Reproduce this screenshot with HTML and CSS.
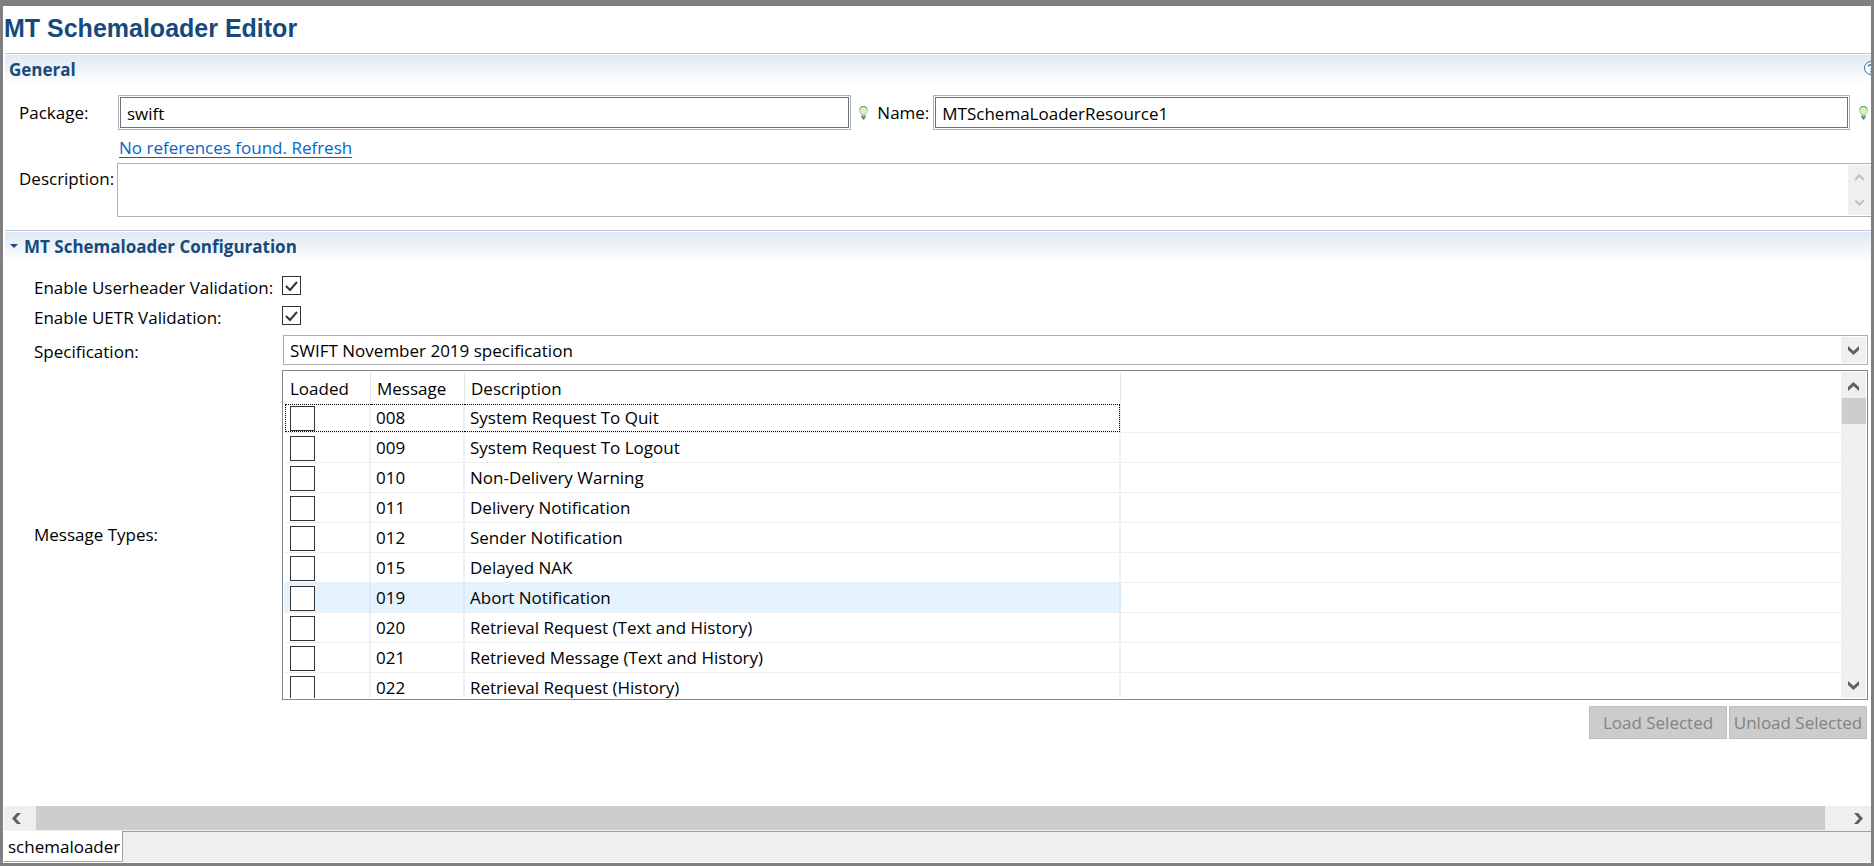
FILE: index.html
```html
<!DOCTYPE html>
<html lang="en">
<head>
<meta charset="UTF-8">
<meta name="viewport" content="width=device-width, initial-scale=1.0">
<title>MT Schemaloader Editor</title>
<link rel="stylesheet" href="styles.css">
</head>
<body>
<svg class="defs" width="0" height="0" aria-hidden="true">
    <symbol id="bulb" viewBox="0 0 9 14">
        <path d="M4.5 .5C2 .5.5 2 .5 4.300c0 2 1.600 2.600 2 4.700h4c.4-2.100 2-2.700 2-4.700C8.500 2 7 .5 4.500 .5z" fill="#e3eeb4" stroke="#8fcf9c"/>
        <path d="M1 2.500C1.600 1.200 2.800.5 4.500.5s2.900.7 3.500 2" fill="none" stroke="#3f9a5c"/>
        <path d="M2.500 9.500h4v2.500h-1v1.500h-2V12h-1z" fill="#54708c"/>
        <path d="M4 10.500h1.500" stroke="#c9d8e6"/>
    </symbol>
    <symbol id="down" viewBox="0 0 11 9">
        <path d="M0 0l5.500 5L11 0v4L5.500 9 0 4z" fill="currentColor"/>
    </symbol>
    <symbol id="up" viewBox="0 0 11 9">
        <path d="M0 9l5.500-5L11 9V5L5.500 0 0 5z" fill="currentColor"/>
    </symbol>
    <symbol id="left" viewBox="0 0 9 11">
        <path d="M9 0L4 5.500 9 11H5L0 5.500 5 0z" fill="currentColor"/>
    </symbol>
    <symbol id="right" viewBox="0 0 9 11">
        <path d="M0 0l5 5.500L0 11h4l5-5.500L4 0z" fill="currentColor"/>
    </symbol>
</svg>

<main class="editor">
    <h1>MT Schemaloader Editor</h1>

    <section>
        <header class="section-header">
            <h2>General</h2>
            <svg class="help" width="14" height="14" viewBox="0 0 14 14">
                <circle cx="7" cy="7" r="6.500" fill="#fff" stroke="#3a72ab"/>
                <path d="M4.500 5.500C4.500 3 9.500 3 9.500 5.500 9.500 7 7 7 7 8.500M7 10v1.500" fill="none" stroke="#3a72ab" stroke-width="1.500"/>
            </svg>
        </header>
        <div class="general">
            <label for="package">Package:</label>
            <div class="field"><input type="text" id="package" value="swift"></div>
            <div class="name-label">
                <svg width="9" height="14"><use href="#bulb"/></svg>
                <label for="name">Name:</label>
            </div>
            <div class="field"><input type="text" id="name" value="MTSchemaLoaderResource1"></div>
            <svg class="end-bulb" width="9" height="14"><use href="#bulb"/></svg>
            <a href="#" class="refresh">No references found. Refresh</a>
            <label for="description" class="description-label">Description:</label>
            <div class="description">
                <textarea id="description"></textarea>
                <div class="scroll muted">
                    <svg width="9" height="7"><use href="#up"/></svg>
                    <svg width="9" height="7"><use href="#down"/></svg>
                </div>
            </div>
        </div>
    </section>

    <section>
        <header class="section-header">
            <svg class="twistie" width="8" height="4" viewBox="0 0 8 4"><path d="M0 0h8L4 4z" fill="#164a7d"/></svg>
            <h2>MT Schemaloader Configuration</h2>
        </header>
        <div class="config">
            <label for="userheader">Enable Userheader Validation:</label>
            <input type="checkbox" id="userheader" class="check" checked>
            <label for="uetr">Enable UETR Validation:</label>
            <input type="checkbox" id="uetr" class="check" checked>
            <label for="spec">Specification:</label>
            <div class="combo">
                <select id="spec"><option>SWIFT November 2019 specification</option></select>
                <span class="combo-arrow"><svg width="11" height="9"><use href="#down"/></svg></span>
            </div>
            <span>Message Types:</span>
            <div class="list">
                <div class="viewport">
                    <table>
                        <colgroup><col class="col-loaded"><col class="col-message"><col class="col-description"><col></colgroup>
                        <thead>
                            <tr><th>Loaded</th><th>Message</th><th>Description</th><th></th></tr>
                        </thead>
                        <tbody>
                            <tr class="focused"><td><input type="checkbox" aria-label="008"></td><td>008</td><td>System Request To Quit</td><td></td></tr>
                            <tr><td><input type="checkbox" aria-label="009"></td><td>009</td><td>System Request To Logout</td><td></td></tr>
                            <tr><td><input type="checkbox" aria-label="010"></td><td>010</td><td>Non-Delivery Warning</td><td></td></tr>
                            <tr><td><input type="checkbox" aria-label="011"></td><td>011</td><td>Delivery Notification</td><td></td></tr>
                            <tr><td><input type="checkbox" aria-label="012"></td><td>012</td><td>Sender Notification</td><td></td></tr>
                            <tr><td><input type="checkbox" aria-label="015"></td><td>015</td><td>Delayed NAK</td><td></td></tr>
                            <tr class="hot"><td><input type="checkbox" aria-label="019"></td><td>019</td><td>Abort Notification</td><td></td></tr>
                            <tr><td><input type="checkbox" aria-label="020"></td><td>020</td><td>Retrieval Request (Text and History)</td><td></td></tr>
                            <tr><td><input type="checkbox" aria-label="021"></td><td>021</td><td>Retrieved Message (Text and History)</td><td></td></tr>
                            <tr><td><input type="checkbox" aria-label="022"></td><td>022</td><td>Retrieval Request (History)</td><td></td></tr>
                        </tbody>
                    </table>
                </div>
                <div class="scroll">
                    <svg width="11" height="9"><use href="#up"/></svg>
                    <div class="thumb"></div>
                    <svg width="11" height="9"><use href="#down"/></svg>
                </div>
            </div>
        </div>
        <div class="actions">
            <button disabled>Load Selected</button>
            <button disabled>Unload Selected</button>
        </div>
    </section>
</main>

<div class="hscroll">
    <svg width="9" height="11"><use href="#left"/></svg>
    <div class="hthumb"></div>
    <svg width="9" height="11"><use href="#right"/></svg>
</div>
<nav class="tabs"><a href="#" class="tab">schemaloader</a></nav>
</body>
</html>
```
FILE: styles.css
```css
* {
    box-sizing: border-box;
}

body {
    margin: 0;
    min-height: 100vh;
    display: flex;
    flex-direction: column;
    border: 3px solid #808080;
    border-top-width: 6px;
    background: #fff;
    color: #000;
    font: 17px/24px "Open Sans", "Noto Sans", sans-serif;
    overflow-x: hidden;
}

input, select, textarea, button {
    font: inherit;
    color: inherit;
    margin: 0;
    border-radius: 0;
}

svg {
    display: block;
    flex: none;
}

.defs {
    position: absolute;
}

.editor {
    flex: 1;
}

h1 {
    margin: 0;
    padding: 6px 1px 9px;
    font: bold 25px/32px "Liberation Sans", Arial, sans-serif;
    color: #164a7d;
}

.section-header {
    display: flex;
    align-items: center;
    height: 33px;
    margin-left: 2px;
    padding: 0 0 0 4px;
    border-top: 1px solid #b8c9dc;
    box-shadow: inset 0 1px #fff;
    background: linear-gradient(#dfe7f1, #fff 30px);
    overflow: hidden;
}

h2 {
    margin: 0;
    font-size: 17px;
    line-height: 24px;
    font-weight: 700;
    color: #164a7d;
}

.help {
    margin: 0 -7px 5px auto;
}

.twistie {
    margin: 0 6px 2px 1px;
}

/* General section */
.general {
    display: grid;
    grid-template-columns: 99px 4fr 82px 5fr 21px;
    align-items: center;
    padding: 9px 0 0 16px;
}

.field {
    border: 1px solid #abb5c0;
    padding: 1px;
}

.field input {
    display: block;
    width: 100%;
    height: 31px;
    padding: 2px 6px 0;
    border: 1px solid #6e7276;
    background: #fff;
}

.name-label {
    display: flex;
    align-items: center;
    gap: 9px;
    padding-left: 8px;
}

.end-bulb {
    margin-left: 9px;
}

.refresh {
    grid-column: 2 / -1;
    justify-self: start;
    margin: 6px 0 3px 1px;
    color: #0066cc;
    text-underline-offset: 3px;
}

.description-label {
    grid-column: 1;
    align-self: start;
    padding-top: 4px;
}

.description {
    grid-column: 2 / -1;
    display: flex;
    height: 54px;
    padding: 1px 0;
    margin: 0 0 13px -1px;
    border: 1px solid #abb5c0;
    border-right: 0;
}

.description textarea {
    flex: 1;
    border: 0;
    resize: none;
    outline: 0;
    overflow: hidden;
}

.scroll {
    display: flex;
    flex-direction: column;
    align-items: center;
    justify-content: space-between;
    width: 25px;
    padding: 10px 0 8px;
    background: #efefef;
    color: #606060;
}

.scroll.muted {
    width: 23px;
    padding: 9px 0;
    color: #bfbfbf;
}

/* Configuration section */
.config {
    display: grid;
    grid-template-columns: 248px 1fr;
    align-items: center;
    padding: 10px 3px 0 31px;
}

.config > label {
    line-height: 30px;
}

input[type="checkbox"] {
    appearance: none;
    display: block;
    background: #fff;
    border: 1px solid #333;
}

.check {
    align-self: start;
    width: 19px;
    height: 19px;
    margin-top: 3px;
}

.check:checked {
    background: #fff url("data:image/svg+xml,%3Csvg xmlns='http://www.w3.org/2000/svg' viewBox='0 0 17 17'%3E%3Cpath d='M3 9l4 4 7-8' fill='none' stroke='%23333' stroke-width='2'/%3E%3C/svg%3E");
}

.combo {
    display: flex;
    align-items: stretch;
    height: 30px;
    margin: 2px 0 5px 1px;
    padding: 1px;
    border: 1px solid #adadb3;
}

.combo select {
    appearance: none;
    flex: 1;
    min-width: 0;
    padding: 2px 5px 0;
    border: 0;
    background: #fff;
}

.combo-arrow {
    display: flex;
    align-items: center;
    justify-content: center;
    width: 25px;
    background: #efefef;
    color: #606060;
}

.list {
    display: flex;
    height: 330px;
    padding: 1px;
    border: 1px solid #828790;
}

.viewport {
    flex: 1;
    overflow: hidden;
}

table {
    width: 100%;
    table-layout: fixed;
    border-collapse: separate;
    border-spacing: 0;
}

.col-loaded {
    width: 87px;
}

.col-message {
    width: 94px;
}

.col-description {
    width: 656px;
}

th, td {
    position: relative;
    height: 30px;
    padding: 1px 5px 0;
    text-align: left;
    font-weight: normal;
    line-height: 24px;
    border-bottom: 1px solid #eee;
}

td:first-child {
    padding-left: 6px;
}

th {
    height: 31px;
    padding: 2px 6px 0;
    border-bottom: 0;
    border-right: 1px solid #e5e5e5;
}

td {
    border-right: 2px solid #edf1f7;
}

th:last-child, td:last-child {
    border-right: 0;
}

td input[type="checkbox"] {
    width: 25px;
    height: 25px;
}

.hot td:not(:last-child) {
    background: #e5f3ff;
    border-right-color: #d9eafa;
}

/* focus rectangle drawn across the data cells */
.focused td:not(:last-child)::after {
    content: "";
    position: absolute;
    inset: 1px -2px 0 0;
    border: 0 dotted #000;
    border-width: 1px 0;
    pointer-events: none;
}

.focused td:first-child::after {
    left: 1px;
    border-left-width: 1px;
}

.focused td:nth-child(3)::after {
    right: -1px;
    border-right-width: 1px;
}

.thumb {
    width: 24px;
    height: 26px;
    margin: 7px 0 auto;
    background: #cdcdcd;
}

.actions {
    display: flex;
    justify-content: flex-end;
    gap: 2px;
    padding: 6px 4px 0;
}

.actions button {
    width: 138px;
    height: 33px;
    padding: 0;
    border: 1px solid #bfbfbf;
    background: #ccc;
    color: #838383;
}

/* Bottom scrollbar and page tabs */
.hscroll {
    display: flex;
    align-items: center;
    height: 25px;
    margin-left: 1px;
    padding: 0 8px 1px;
    background: #efefef;
    color: #606060;
}

.hthumb {
    flex: 1;
    height: 24px;
    margin: 0 29px 0 15px;
    background: #cdcdcd;
}

.tabs {
    display: flex;
    height: 31px;
    margin: 0 0 1px 1px;
    background: linear-gradient(#a0a0a0 1px, #efefef 1px);
}

.tab {
    padding: 4px 2px 0 4px;
    background: #fff;
    border: 1px solid #a0a0a0;
    border-width: 0 1px 1px 0;
    border-bottom-right-radius: 2px;
    color: #000;
    text-decoration: none;
}
```
